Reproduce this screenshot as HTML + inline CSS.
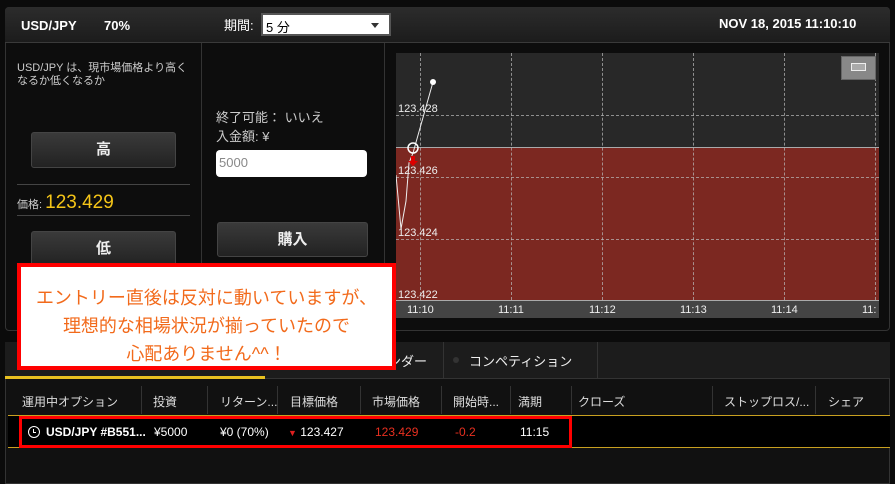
<!DOCTYPE html>
<html><head><meta charset="utf-8"><style>
*{margin:0;padding:0;box-sizing:border-box}
body{width:895px;height:484px;background:#0b0b0b;position:relative;overflow:hidden;font-family:"Liberation Sans","Noto Sans CJK JP",sans-serif;color:#ddd}
.a{position:absolute}
.btn{position:absolute;background:linear-gradient(#3a3a3a,#222);border:1px solid #444;border-radius:3px;color:#eee;font-weight:bold;font-size:15px;text-align:center}
.dl{position:absolute;border-top:1px dashed #bbb;opacity:.7}
.dv{position:absolute;border-left:1px dashed #bbb;opacity:.7}
.lab{position:absolute;font-size:11px;color:#eee}
.th{position:absolute;top:393px;font-size:12px;color:#ddd}
.sep{position:absolute;top:386px;height:28px;border-left:1px solid #333}
.td{position:absolute;top:425px;font-size:12px;color:#fff}
</style></head><body>
<!-- top panel -->
<div class="a" style="left:5px;top:7px;width:885px;height:324px;background:#0d0d0d;border:1px solid #333;border-radius:4px"></div>
<div class="a" style="left:5px;top:7px;width:885px;height:36px;background:linear-gradient(#2c2c2c,#1c1c1c);border-bottom:1px solid #3a3a3a;border-radius:4px 4px 0 0"></div>
<div class="a" style="left:21px;top:18px;font-size:13px;font-weight:bold;color:#fff">USD/JPY</div>
<div class="a" style="left:104px;top:18px;font-size:13px;font-weight:bold;color:#fff">70%</div>
<div class="a" style="left:224px;top:15px;font-size:13px;color:#fff">期間:</div>
<div class="a" style="left:261px;top:13px;width:130px;height:23px;background:#fff;border:2px solid #555;font-size:13px;color:#000;padding:2px 3px">5 分<span style="position:absolute;right:10px;top:8px;border-left:4px solid transparent;border-right:4px solid transparent;border-top:5px solid #333"></span></div>
<div class="a" style="left:719px;top:16px;font-size:13px;font-weight:bold;color:#fff">NOV 18, 2015 11:10:10</div>
<div class="a" style="left:201px;top:43px;height:288px;border-left:1px solid #333"></div>
<div class="a" style="left:384px;top:43px;height:288px;border-left:1px solid #333"></div>
<div class="a" style="left:17px;top:62px;font-size:11px;line-height:13px;color:#ccc;width:180px">USD/JPY は、現市場価格より高くなるか低くなるか</div>
<div class="btn" style="left:31px;top:132px;width:145px;height:36px;line-height:34px">高</div>
<div class="a" style="left:17px;top:184px;width:173px;border-top:1px solid #444"></div>
<div class="a" style="left:17px;top:192px;font-size:11px;color:#ccc">価格: <span style="font-size:19px;color:#f5c518">123.429</span></div>
<div class="a" style="left:17px;top:215px;width:173px;border-top:1px solid #444"></div>
<div class="btn" style="left:31px;top:231px;width:145px;height:36px;line-height:34px">低</div>
<div class="a" style="left:216px;top:108px;font-size:13px;color:#ccc;line-height:19px">終了可能： いいえ<br>入金額: ¥</div>
<div class="a" style="left:216px;top:150px;width:151px;height:27px;background:#fff;border-radius:4px;font-size:13px;color:#888;padding:5px 3px">5000</div>
<div class="btn" style="left:217px;top:222px;width:151px;height:35px;line-height:33px">購入</div>
<!-- chart -->
<div class="a" style="left:396px;top:53px;width:483px;height:94px;background:#282828"></div>
<div class="a" style="left:396px;top:147px;width:483px;height:153px;background:#7c2821;border-top:1px solid #aaa"></div>
<div class="a" style="left:396px;top:300px;width:483px;height:18px;background:#444;border-top:1px solid #aaa"></div>
<div class="dl" style="left:396px;top:115px;width:483px"></div>
<div class="dl" style="left:396px;top:177px;width:483px"></div>
<div class="dl" style="left:396px;top:239px;width:483px"></div>
<div class="dv" style="left:420px;top:53px;height:247px"></div>
<div class="dv" style="left:511px;top:53px;height:247px"></div>
<div class="dv" style="left:602px;top:53px;height:247px"></div>
<div class="dv" style="left:693px;top:53px;height:247px"></div>
<div class="dv" style="left:784px;top:53px;height:247px"></div>
<div class="dv" style="left:875px;top:53px;height:247px"></div>
<div class="lab" style="left:398px;top:103px">123.428</div>
<div class="lab" style="left:398px;top:165px">123.426</div>
<div class="lab" style="left:398px;top:227px">123.424</div>
<div class="lab" style="left:398px;top:289px">123.422</div>
<div class="lab" style="left:407px;top:304px">11:10</div>
<div class="lab" style="left:498px;top:304px">11:11</div>
<div class="lab" style="left:589px;top:304px">11:12</div>
<div class="lab" style="left:680px;top:304px">11:13</div>
<div class="lab" style="left:771px;top:304px">11:14</div>
<div class="lab" style="left:862px;top:304px">11:</div>
<div class="a" style="left:841px;top:56px;width:35px;height:24px;background:#888;border:1px solid #666"></div>
<div class="a" style="left:851px;top:63px;width:15px;height:8px;border:1px solid #eee;background:#aaa"></div>
<svg class="a" style="left:396px;top:53px" width="60" height="250"><polyline points="0,122 5,176 10,148 13,110 17,100 37,29" fill="none" stroke="#eee" stroke-width="1"/><circle cx="37" cy="29" r="3" fill="#fff"/><circle cx="17" cy="95" r="5" fill="none" stroke="#fff" stroke-width="1.5"/><path d="M15 103h4v5h3l-5 5-5-5h3z" fill="#d00"/></svg>
<!-- bottom panel -->
<div class="a" style="left:5px;top:342px;width:885px;height:142px;background:#111;border:1px solid #333;border-radius:4px 4px 0 0"></div>
<div class="a" style="left:5px;top:342px;width:885px;height:37px;background:#1c1c1c;border-bottom:1px solid #333"></div>
<div class="a" style="left:5px;top:376px;width:260px;height:3px;background:#e8c020"></div>
<div class="a" style="left:388px;top:351px;font-size:13px;color:#eee">ンダー</div>
<div class="a" style="left:443px;top:342px;height:37px;border-left:1px solid #333"></div>
<div class="a" style="left:597px;top:342px;height:37px;border-left:1px solid #333"></div>
<div class="a" style="left:453px;top:357px;width:6px;height:6px;border-radius:50%;background:#333"></div>
<div class="a" style="left:469px;top:351px;font-size:13px;color:#eee">コンペティション</div>
<div class="th" style="left:22px">運用中オプション</div>
<div class="th" style="left:153px">投資</div>
<div class="th" style="left:220px">リターン...</div>
<div class="th" style="left:290px">目標価格</div>
<div class="th" style="left:372px">市場価格</div>
<div class="th" style="left:453px">開始時...</div>
<div class="th" style="left:518px">満期</div>
<div class="th" style="left:578px">クローズ</div>
<div class="th" style="left:724px">ストップロス/...</div>
<div class="th" style="left:828px">シェア</div>
<div class="sep" style="left:141px"></div><div class="sep" style="left:207px"></div><div class="sep" style="left:277px"></div><div class="sep" style="left:360px"></div><div class="sep" style="left:441px"></div><div class="sep" style="left:510px"></div><div class="sep" style="left:571px"></div><div class="sep" style="left:712px"></div><div class="sep" style="left:815px"></div>
<div class="a" style="left:8px;top:415px;width:882px;height:33px;background:#000;border-top:1px solid #c8a020;border-bottom:1px solid #c8a020"></div>
<div class="a" style="left:19px;top:416px;width:553px;height:32px;border:3px solid #f00"></div>
<div class="a" style="left:28px;top:426px;width:12px;height:12px;border:1.5px solid #fff;border-radius:50%"></div>
<div class="a" style="left:33px;top:429px;width:3px;height:4px;border-left:1.5px solid #fff;border-bottom:1.5px solid #fff"></div>
<div class="td" style="left:46px;font-weight:bold">USD/JPY #B551...</div>
<div class="td" style="left:154px">¥5000</div>
<div class="td" style="left:220px">¥0 (70%)</div>
<div class="td" style="left:288px"><span style="color:#e02020;font-size:9px">▼</span> 123.427</div>
<div class="td" style="left:375px;color:#e83020">123.429</div>
<div class="td" style="left:455px;color:#e83020">-0.2</div>
<div class="td" style="left:520px">11:15</div>
<!-- callout -->
<div class="a" style="left:17px;top:263px;width:379px;height:107px;background:#fff;border:4px solid #f00;color:#f26a1b;font-size:18px;text-align:center;line-height:28px;padding-top:17px">エントリー直後は反対に動いていますが、<br>理想的な相場状況が揃っていたので<br>心配ありません^^！</div>
</body></html>
